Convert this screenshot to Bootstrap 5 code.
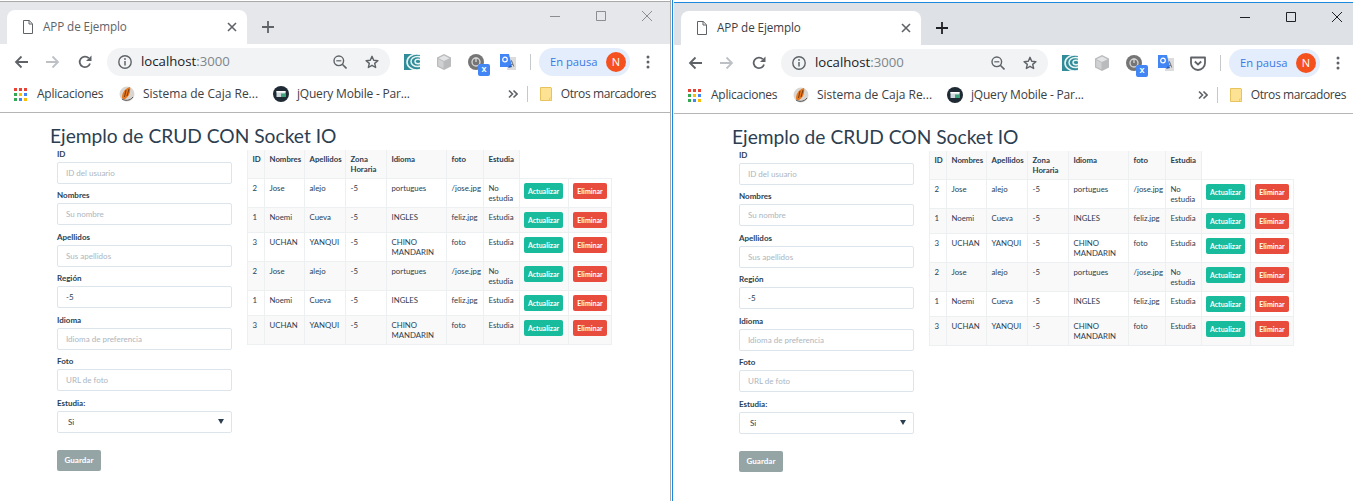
<!DOCTYPE html>
<html lang="es">
<head>
<meta charset="UTF-8">
<meta name="viewport" content="width=device-width, initial-scale=1.0">
<title>APP de Ejemplo</title>
<link href="https://cdn.jsdelivr.net/npm/bootstrap@5.3.0/dist/css/bootstrap.min.css" rel="stylesheet">
<style>
    html, body { height: 501px; overflow: hidden; }
    body { background: #fff; font-family: "Lato", sans-serif; color: #2c3e50; }

    /* windows */
    .win { height: 501px; flex: none; overflow: hidden; }
    .win-a { width: 671px; --strip: #e5e7ea; --ctl: #8a8d91; --tabtxt: #5f6368; --plus: #5f6368; --edge: 15px; --page: 50px; border-right: 1px solid #aaa; }
    .win-b { width: 681px; margin-left: 1px; padding-left: 1px; --strip: #dee1e6; --ctl: #202124; --tabtxt: #3c4043; --plus: #202124; --edge: 8px; --page: 58px; border-left: 1px solid #1a88dc; }
    .win-a .win-top { border-top: 1px solid #aaa; margin-top: 1px; }
    .win-b .win-top { border-top: 1px solid #1a88dc; margin-top: 2px; }

    /* tab strip */
    .chrome-ui { font-family: "Open Sans", "Noto Sans", sans-serif; color: #3c4043; }
    .tabstrip { height: 42px; background: var(--strip); padding: 8px 0 0 7px; }
    .tab-item { width: 240px; height: 34px; background: #fff; border-radius: 8px 8px 0 0; padding: 0 10px 0 15px; font-size: 11.7px; color: var(--tabtxt); }
    .tab-title { margin-left: 9px; letter-spacing: -.1px; }
    .tab-new { margin: 0 0 0 14px; width: 14px; height: 14px; color: var(--plus); }
    .win-ctl { margin-left: auto; height: 27px; margin-top: -8px; }
    .win-ctl svg { width: 12px; height: 12px; margin-right: 34px; color: var(--ctl); display: block; }
    .win-ctl svg:last-child { margin-right: 0; }
    .win-a .win-ctl { padding-right: 17px; }
    .win-b .win-ctl { padding-right: 10px; }

    /* toolbar */
    .toolbar { height: 34px; padding: 2px var(--edge) 0 14px; background: #fff; }
    .tb-ico { width: 14px; height: 14px; color: #5f6368; flex: none; }
    .tb-gap { margin-left: 18px; }
    .tb-off { color: #bdc1c6; }
    .omni { flex: 1 1 0; height: 28px; margin-left: 15px; background: #f1f3f4; border-radius: 14px; padding: 0 11px; font-size: 13.2px; }
    .omni-text { margin-left: 9px; color: #202124; }
    .omni-text span { color: #80868b; }
    .omni-zoom { margin-left: auto; }
    .omni-star { margin-left: 18px; }
    .ext { width: 16px; height: 16px; margin-left: 16px; flex: none; }
    .ext-first { margin-left: 14px; }
    .ext-wrap { position: relative; }
    .ext-badge { position: absolute; right: -6px; bottom: -6px; width: 12px; height: 12px; background: #4285f4; border-radius: 2px; color: #fff; font: 700 9px/11px "Liberation Sans", sans-serif; text-align: center; }
    .tb-sep { width: 1px; height: 16px; background: #c6c8ca; margin: 0 8px 0 14px; flex: none; }
    .pill { width: 91px; height: 28px; border-radius: 14px; background: #e3edfb; color: #3b78e7; font-size: 11.2px; padding: 0 4px 0 11px; flex: none; }
    .avatar { width: 20px; height: 20px; border-radius: 50%; background: #f4511e; color: #fff; font-size: 11px; line-height: 20px; text-align: center; margin-left: auto; }
    .dots { width: 14px; height: 14px; margin-left: 11px; flex: none; color: #5f6368; }

    /* bookmarks */
    .bookmarks { height: 35px; padding: 0 calc(var(--edge) - 1px) 2px 14px; border-bottom: 1px solid #b5b5b5; font-size: 12px; background: #fff; }
    .bm-item { flex: none; }
    .bm-apps { width: 105px; letter-spacing: -.25px; }
    .bm-sys { width: 154px; }
    .bm-jq { letter-spacing: -.2px; }
    .bm-ico { flex: none; width: 16px; height: 16px; margin-right: 8px; }
    .bm-grid { width: 13px; height: 13px; margin-right: 10px; }
    .bm-more { width: 10px; height: 10px; margin-left: auto; color: #5f6368; flex: none; }
    .bm-sep { width: 1px; height: 16px; background: #c6c8ca; margin: 0 12px 0 9px; flex: none; }
    .bm-folder { width: 12px; height: 14px; margin-right: 9px; flex: none; }
    .bm-other { letter-spacing: -.4px; }

    /* page */
    .page { padding-left: var(--page); }
    .page-title { font-size: 19.2px; line-height: 25px; font-weight: 400; margin: 0; padding-top: 10px; color: #2c3e50; font-family: "Lato", sans-serif; }
    .crud-form { width: 175px; margin-left: 7px; flex: none; }
    .fld-label { display: block; height: 12px; line-height: 12px; font-size: 8px; font-weight: 700; margin: 0 0 2px; }
    .fld-input, .fld-input:focus { height: 21.6px; min-height: 0; padding: 0 8px; margin-bottom: 5.9px; font-family: "Lato", sans-serif; font-size: 8px; color: #2c3e50; border: 1px solid #dce4ec; border-radius: 2px; box-shadow: none; }
    .fld-input::placeholder { color: #acb6c0; }
    .fld-select { padding-left: 10px; background-size: 6px 5px; background-position: right 7px center; background-image: url("data:image/svg+xml,%3csvg xmlns='http://www.w3.org/2000/svg' viewBox='0 0 6 5'%3e%3cpath fill='%232c3e50' d='M0 0h6L3 5z'/%3e%3c/svg%3e"); }
    .btn-save { display: block; width: 44px; height: 21px; margin-top: 17px; padding: 0; font-size: 8px; font-weight: 700; color: #fff; background: #95a5a6; border: 0; border-radius: 2px; }
    .tbl-wrap { width: 365px; margin: 2px 0 0 15px; flex: none; }
    .crud-table { --bs-table-striped-bg: #f9f9f9; --bs-table-border-color: #ecf0f1; --bs-table-color: #2c3e50; --bs-table-striped-color: #2c3e50; --bs-table-bg: #fff; table-layout: fixed; width: 364px; margin: 0; font-size: 7.8px; line-height: 10px; }
    .crud-table > tbody > tr > * { padding: 4px 4.5px; font-weight: 400; border-color: #ecf0f1; }
    .crud-table > tbody > tr > th { font-weight: 700; }
    .crud-table > tbody > tr > td:nth-child(n+8) { padding-left: 4px; }
    .crud-table > tbody > tr:first-child { border: 0; }
    .c-id { width: 17px; } .c-nom { width: 40px; } .c-ape { width: 41px; } .c-zona { width: 41px; }
    .c-idi { width: 60px; } .c-foto { width: 37px; } .c-est { width: 36px; } .c-upd { width: 49px; } .c-del { width: 43px; }
    .btn-row { display: block; height: 16px; padding: 0; font-size: 7px; line-height: 16px; font-weight: 700; color: #fff; border: 0; border-radius: 2px; }
    .btn-upd { width: 39px; background: #18bc9c; }
    .btn-del { width: 34px; background: #e74c3c; }
</style>
</head>
<body class="d-flex">

<svg class="d-none" xmlns="http://www.w3.org/2000/svg">
    <symbol id="i-doc" viewBox="0 0 12 14"><path d="M1.5.5h5.700l3.300 3.300v9.700h-9zM7 .5v3.500h3.500" fill="none" stroke="#5f6368"/></symbol>
    <symbol id="i-x" viewBox="0 0 10 10"><path d="M1 1l8 8M9 1L1 9" stroke="#5f6368" stroke-width="1.600"/></symbol>
    <symbol id="i-plus" viewBox="0 0 14 14"><path d="M7 1v12M1 7h12" stroke="currentColor" stroke-width="1.800"/></symbol>
    <symbol id="i-min" viewBox="0 0 12 12"><path d="M1 6.500h10" stroke="currentColor"/></symbol>
    <symbol id="i-max" viewBox="0 0 12 12"><path d="M1.500 1.500h9v9h-9z" fill="none" stroke="currentColor"/></symbol>
    <symbol id="i-close" viewBox="0 0 12 12"><path d="M1 1l10 10M11 1L1 11" stroke="currentColor"/></symbol>
    <symbol id="i-back" viewBox="0 0 14 14"><path d="M14 7H2M7.500 1.500L2 7l5.500 5.500" fill="none" stroke="currentColor" stroke-width="1.800"/></symbol>
    <symbol id="i-fwd" viewBox="0 0 14 14"><path d="M0 7h12M6.500 1.500L12 7l-5.500 5.500" fill="none" stroke="currentColor" stroke-width="1.800"/></symbol>
    <symbol id="i-reload" viewBox="0 0 14 14"><path d="M12 8.500A5.300 5.300 0 1 1 10.800 3.200" fill="none" stroke="currentColor" stroke-width="1.800"/><path d="M13.500 .5v5.500H8z" fill="currentColor"/></symbol>
    <symbol id="i-info" viewBox="0 0 14 14"><circle cx="7" cy="7" r="6.200" fill="none" stroke="currentColor" stroke-width="1.400"/><path d="M7 6v4.500" stroke="currentColor" stroke-width="1.500"/><circle cx="7" cy="4" r=".9" fill="currentColor"/></symbol>
    <symbol id="i-zoom" viewBox="0 0 14 14"><circle cx="5.800" cy="5.800" r="4.800" fill="none" stroke="currentColor" stroke-width="1.400"/><path d="M9.300 9.300L13.500 13.500" stroke="currentColor" stroke-width="1.600"/><path d="M3.300 5.800h5" stroke="currentColor" stroke-width="1.200"/></symbol>
    <symbol id="i-star" viewBox="0 0 14 14"><path d="M7 1.300l1.700 3.900 4.200.4-3.200 2.800.95 4.100L7 10.300l-3.650 2.200.95-4.100L1.100 5.600l4.200-.4z" fill="none" stroke="currentColor" stroke-width="1.400" stroke-linejoin="round"/></symbol>
    <symbol id="i-swirl" viewBox="0 0 16 16"><path d="M0 0h16v16H0z" fill="#2f8c98"/><g fill="none" stroke="#e8f3f4"><ellipse cx="13" cy="8" rx="10" ry="8" stroke-width="1.600"/><ellipse cx="13.500" cy="7.500" rx="6.500" ry="5" stroke-width="1.500"/><ellipse cx="14" cy="7.500" rx="3" ry="2.200" stroke-width="1.500"/></g></symbol>
    <symbol id="i-cube" viewBox="0 0 16 16"><path d="M8 0l7 3.500v9L8 16l-7-3.500v-9z" fill="#b9bbbd"/><path d="M8 1.500l5.500 2.700L8 7 2.500 4.200z" fill="#e3e4e5"/><path d="M2.200 5L7.500 7.800v6.500l-5.300-2.600z" fill="#d0d1d3"/></symbol>
    <symbol id="i-power" viewBox="0 0 16 16"><circle cx="8" cy="8" r="8" fill="#757575"/><circle cx="8" cy="8" r="4" fill="none" stroke="#d8d8d8" stroke-width="1.300"/><path d="M8 3.500V8" stroke="#d8d8d8" stroke-width="1.300"/></symbol>
    <symbol id="i-trans" viewBox="0 0 16 16"><path d="M8 3h8v13H7z" fill="#dcdcdc"/><path d="M11.500 6.500l-2.300 6M11.500 6.500l2.300 6M10 10.500h3" stroke="#777" fill="none"/><path d="M0 0h9l3 13H0z" fill="#4285f4"/><circle cx="5" cy="5.500" r="2.300" fill="none" stroke="#fff" stroke-width="1.200"/><path d="M8 14l4-1-2-2z" fill="#2a5db0"/></symbol>
    <symbol id="i-pocket" viewBox="0 0 16 16"><path d="M1 2.500h14v5.500a7 7 0 0 1-14 0z" fill="none" stroke="#5f6368" stroke-width="1.800" stroke-linejoin="round"/><path d="M4.800 6.500L8 9.500l3.200-3" fill="none" stroke="#5f6368" stroke-width="1.800"/></symbol>
    <symbol id="i-dots" viewBox="0 0 14 14"><circle cx="7" cy="2" r="1.500" fill="currentColor"/><circle cx="7" cy="7" r="1.500" fill="currentColor"/><circle cx="7" cy="12" r="1.500" fill="currentColor"/></symbol>
    <symbol id="i-apps" viewBox="0 0 13 13"><path d="M0 0h3v3H0z" fill="#ea4335"/><path d="M5 0h3v3H5z" fill="#ea4335"/><path d="M10 0h3v3h-3z" fill="#ea4335"/><path d="M0 5h3v3H0z" fill="#34a853"/><path d="M5 5h3v3H5z" fill="#fbbc05"/><path d="M10 5h3v3h-3z" fill="#4285f4"/><path d="M0 10h3v3H0z" fill="#34a853"/><path d="M5 10h3v3H5z" fill="#4285f4"/><path d="M10 10h3v3h-3z" fill="#fbbc05"/></symbol>
    <symbol id="i-caja" viewBox="0 0 16 16"><circle cx="8" cy="8" r="7.500" fill="#d9d6d2"/><path d="M3 11C3 6 7 2 11 1c1 4-1 10-5 12-1 .5-3 0-3-2z" fill="#e8761a"/><path d="M7 4l-1.500 7M10 3L8 10" stroke="#7a3b10" stroke-width="1"/><path d="M3 13c3 2 8 2 11-2" fill="none" stroke="#555"/></symbol>
    <symbol id="i-jq" viewBox="0 0 16 16"><circle cx="8" cy="8" r="8" fill="#1f2a35"/><path d="M3.500 5h9v6h-9z" fill="#cfd8dc"/><path d="M3.500 5h9v1.500h-9z" fill="#fff"/><path d="M8 7.500h4.500V11H8z" fill="#3fa37c"/></symbol>
    <symbol id="i-more" viewBox="0 0 10 10"><path d="M1 1.500L4.500 5 1 8.500M5.500 1.500L9 5 5.500 8.500" fill="none" stroke="currentColor" stroke-width="1.600"/></symbol>
    <symbol id="i-folder" viewBox="0 0 12 14"><path d="M.5.500h10.500l.5.500v12.500H.5z" fill="#fde293" stroke="#e6c35c"/><path d="M9.500 11h2v2.500h-2z" fill="#fde293" stroke="#e6c35c" stroke-width=".7"/></symbol>
</svg>

<section class="win win-a">
    <div class="win-top chrome-ui">
        <div class="tabstrip d-flex align-items-center">
            <div class="tab-item d-flex align-items-center">
                <svg width="12" height="14"><use href="#i-doc"/></svg>
                <span class="tab-title">APP de Ejemplo</span>
                <svg class="ms-auto" width="10" height="10"><use href="#i-x"/></svg>
            </div>
            <svg class="tab-new"><use href="#i-plus"/></svg>
            <div class="win-ctl d-flex align-items-center align-self-start">
                <svg><use href="#i-min"/></svg>
                <svg><use href="#i-max"/></svg>
                <svg><use href="#i-close"/></svg>
            </div>
        </div>
        <div class="toolbar d-flex align-items-center">
            <svg class="tb-ico"><use href="#i-back"/></svg>
            <svg class="tb-ico tb-gap tb-off"><use href="#i-fwd"/></svg>
            <svg class="tb-ico tb-gap"><use href="#i-reload"/></svg>
            <div class="omni d-flex align-items-center">
                <svg class="tb-ico"><use href="#i-info"/></svg>
                <span class="omni-text">localhost<span>:3000</span></span>
                <svg class="tb-ico omni-zoom"><use href="#i-zoom"/></svg>
                <svg class="tb-ico omni-star"><use href="#i-star"/></svg>
            </div>
            <svg class="ext ext-first"><use href="#i-swirl"/></svg>
            <svg class="ext"><use href="#i-cube"/></svg>
            <div class="ext ext-wrap"><svg class="d-block" width="16" height="16"><use href="#i-power"/></svg><span class="ext-badge">x</span></div>
            <svg class="ext"><use href="#i-trans"/></svg>
            <div class="tb-sep"></div>
            <div class="pill d-flex align-items-center">En pausa<span class="avatar">N</span></div>
            <svg class="dots"><use href="#i-dots"/></svg>
        </div>
        <div class="bookmarks d-flex align-items-center">
            <div class="bm-item bm-apps d-flex align-items-center"><svg class="bm-grid"><use href="#i-apps"/></svg>Aplicaciones</div>
            <div class="bm-item bm-sys d-flex align-items-center"><svg class="bm-ico"><use href="#i-caja"/></svg>Sistema de Caja Re...</div>
            <div class="bm-item bm-jq d-flex align-items-center"><svg class="bm-ico"><use href="#i-jq"/></svg>jQuery Mobile - Par...</div>
            <svg class="bm-more"><use href="#i-more"/></svg>
            <div class="bm-sep"></div>
            <svg class="bm-folder"><use href="#i-folder"/></svg>
            <span class="bm-other">Otros marcadores</span>
        </div>
    </div>
    <main class="page">
        <h2 class="page-title">Ejemplo de CRUD CON Socket IO</h2>
        <div class="d-flex">
            <form class="crud-form">
                <label class="fld-label">ID</label>
                <input class="form-control fld-input" placeholder="ID del usuario">
                <label class="fld-label">Nombres</label>
                <input class="form-control fld-input" placeholder="Su nombre">
                <label class="fld-label">Apellidos</label>
                <input class="form-control fld-input" placeholder="Sus apellidos">
                <label class="fld-label">Región</label>
                <input class="form-control fld-input" value="-5">
                <label class="fld-label">Idioma</label>
                <input class="form-control fld-input" placeholder="Idioma de preferencia">
                <label class="fld-label">Foto</label>
                <input class="form-control fld-input" placeholder="URL de foto">
                <label class="fld-label">Estudia:</label>
                <select class="form-select fld-input fld-select"><option>Si</option><option>No</option></select>
                <button type="button" class="btn btn-save">Guardar</button>
            </form>
            <div class="tbl-wrap">
                <table class="table table-bordered table-striped crud-table">
                    <colgroup><col class="c-id"><col class="c-nom"><col class="c-ape"><col class="c-zona"><col class="c-idi"><col class="c-foto"><col class="c-est"><col class="c-upd"><col class="c-del"></colgroup>
                    <tbody>
                        <tr><th>ID</th><th>Nombres</th><th>Apellidos</th><th>Zona Horaria</th><th>Idioma</th><th>foto</th><th>Estudia</th></tr>
                        <tr><td>2</td><td>Jose</td><td>alejo</td><td>-5</td><td>portugues</td><td>/jose.jpg</td><td>No estudia</td><td><button class="btn btn-row btn-upd">Actualizar</button></td><td><button class="btn btn-row btn-del">Eliminar</button></td></tr>
                        <tr><td>1</td><td>Noemi</td><td>Cueva</td><td>-5</td><td>INGLES</td><td>feliz.jpg</td><td>Estudia</td><td><button class="btn btn-row btn-upd">Actualizar</button></td><td><button class="btn btn-row btn-del">Eliminar</button></td></tr>
                        <tr><td>3</td><td>UCHAN</td><td>YANQUI</td><td>-5</td><td>CHINO MANDARIN</td><td>foto</td><td>Estudia</td><td><button class="btn btn-row btn-upd">Actualizar</button></td><td><button class="btn btn-row btn-del">Eliminar</button></td></tr>
                        <tr><td>2</td><td>Jose</td><td>alejo</td><td>-5</td><td>portugues</td><td>/jose.jpg</td><td>No estudia</td><td><button class="btn btn-row btn-upd">Actualizar</button></td><td><button class="btn btn-row btn-del">Eliminar</button></td></tr>
                        <tr><td>1</td><td>Noemi</td><td>Cueva</td><td>-5</td><td>INGLES</td><td>feliz.jpg</td><td>Estudia</td><td><button class="btn btn-row btn-upd">Actualizar</button></td><td><button class="btn btn-row btn-del">Eliminar</button></td></tr>
                        <tr><td>3</td><td>UCHAN</td><td>YANQUI</td><td>-5</td><td>CHINO MANDARIN</td><td>foto</td><td>Estudia</td><td><button class="btn btn-row btn-upd">Actualizar</button></td><td><button class="btn btn-row btn-del">Eliminar</button></td></tr>
                    </tbody>
                </table>
            </div>
        </div>
    </main>
</section>

<section class="win win-b">
    <div class="win-top chrome-ui">
        <div class="tabstrip d-flex align-items-center">
            <div class="tab-item d-flex align-items-center">
                <svg width="12" height="14"><use href="#i-doc"/></svg>
                <span class="tab-title">APP de Ejemplo</span>
                <svg class="ms-auto" width="10" height="10"><use href="#i-x"/></svg>
            </div>
            <svg class="tab-new"><use href="#i-plus"/></svg>
            <div class="win-ctl d-flex align-items-center align-self-start">
                <svg><use href="#i-min"/></svg>
                <svg><use href="#i-max"/></svg>
                <svg><use href="#i-close"/></svg>
            </div>
        </div>
        <div class="toolbar d-flex align-items-center">
            <svg class="tb-ico"><use href="#i-back"/></svg>
            <svg class="tb-ico tb-gap tb-off"><use href="#i-fwd"/></svg>
            <svg class="tb-ico tb-gap"><use href="#i-reload"/></svg>
            <div class="omni d-flex align-items-center">
                <svg class="tb-ico"><use href="#i-info"/></svg>
                <span class="omni-text">localhost<span>:3000</span></span>
                <svg class="tb-ico omni-zoom"><use href="#i-zoom"/></svg>
                <svg class="tb-ico omni-star"><use href="#i-star"/></svg>
            </div>
            <svg class="ext ext-first"><use href="#i-swirl"/></svg>
            <svg class="ext"><use href="#i-cube"/></svg>
            <div class="ext ext-wrap"><svg class="d-block" width="16" height="16"><use href="#i-power"/></svg><span class="ext-badge">x</span></div>
            <svg class="ext"><use href="#i-trans"/></svg>
            <svg class="ext"><use href="#i-pocket"/></svg>
            <div class="tb-sep"></div>
            <div class="pill d-flex align-items-center">En pausa<span class="avatar">N</span></div>
            <svg class="dots"><use href="#i-dots"/></svg>
        </div>
        <div class="bookmarks d-flex align-items-center">
            <div class="bm-item bm-apps d-flex align-items-center"><svg class="bm-grid"><use href="#i-apps"/></svg>Aplicaciones</div>
            <div class="bm-item bm-sys d-flex align-items-center"><svg class="bm-ico"><use href="#i-caja"/></svg>Sistema de Caja Re...</div>
            <div class="bm-item bm-jq d-flex align-items-center"><svg class="bm-ico"><use href="#i-jq"/></svg>jQuery Mobile - Par...</div>
            <svg class="bm-more"><use href="#i-more"/></svg>
            <div class="bm-sep"></div>
            <svg class="bm-folder"><use href="#i-folder"/></svg>
            <span class="bm-other">Otros marcadores</span>
        </div>
    </div>
    <main class="page">
        <h2 class="page-title">Ejemplo de CRUD CON Socket IO</h2>
        <div class="d-flex">
            <form class="crud-form">
                <label class="fld-label">ID</label>
                <input class="form-control fld-input" placeholder="ID del usuario">
                <label class="fld-label">Nombres</label>
                <input class="form-control fld-input" placeholder="Su nombre">
                <label class="fld-label">Apellidos</label>
                <input class="form-control fld-input" placeholder="Sus apellidos">
                <label class="fld-label">Región</label>
                <input class="form-control fld-input" value="-5">
                <label class="fld-label">Idioma</label>
                <input class="form-control fld-input" placeholder="Idioma de preferencia">
                <label class="fld-label">Foto</label>
                <input class="form-control fld-input" placeholder="URL de foto">
                <label class="fld-label">Estudia:</label>
                <select class="form-select fld-input fld-select"><option>Si</option><option>No</option></select>
                <button type="button" class="btn btn-save">Guardar</button>
            </form>
            <div class="tbl-wrap">
                <table class="table table-bordered table-striped crud-table">
                    <colgroup><col class="c-id"><col class="c-nom"><col class="c-ape"><col class="c-zona"><col class="c-idi"><col class="c-foto"><col class="c-est"><col class="c-upd"><col class="c-del"></colgroup>
                    <tbody>
                        <tr><th>ID</th><th>Nombres</th><th>Apellidos</th><th>Zona Horaria</th><th>Idioma</th><th>foto</th><th>Estudia</th></tr>
                        <tr><td>2</td><td>Jose</td><td>alejo</td><td>-5</td><td>portugues</td><td>/jose.jpg</td><td>No estudia</td><td><button class="btn btn-row btn-upd">Actualizar</button></td><td><button class="btn btn-row btn-del">Eliminar</button></td></tr>
                        <tr><td>1</td><td>Noemi</td><td>Cueva</td><td>-5</td><td>INGLES</td><td>feliz.jpg</td><td>Estudia</td><td><button class="btn btn-row btn-upd">Actualizar</button></td><td><button class="btn btn-row btn-del">Eliminar</button></td></tr>
                        <tr><td>3</td><td>UCHAN</td><td>YANQUI</td><td>-5</td><td>CHINO MANDARIN</td><td>foto</td><td>Estudia</td><td><button class="btn btn-row btn-upd">Actualizar</button></td><td><button class="btn btn-row btn-del">Eliminar</button></td></tr>
                        <tr><td>2</td><td>Jose</td><td>alejo</td><td>-5</td><td>portugues</td><td>/jose.jpg</td><td>No estudia</td><td><button class="btn btn-row btn-upd">Actualizar</button></td><td><button class="btn btn-row btn-del">Eliminar</button></td></tr>
                        <tr><td>1</td><td>Noemi</td><td>Cueva</td><td>-5</td><td>INGLES</td><td>feliz.jpg</td><td>Estudia</td><td><button class="btn btn-row btn-upd">Actualizar</button></td><td><button class="btn btn-row btn-del">Eliminar</button></td></tr>
                        <tr><td>3</td><td>UCHAN</td><td>YANQUI</td><td>-5</td><td>CHINO MANDARIN</td><td>foto</td><td>Estudia</td><td><button class="btn btn-row btn-upd">Actualizar</button></td><td><button class="btn btn-row btn-del">Eliminar</button></td></tr>
                    </tbody>
                </table>
            </div>
        </div>
    </main>
</section>

<script src="https://cdn.jsdelivr.net/npm/bootstrap@5.3.0/dist/js/bootstrap.bundle.min.js"></script>
</body>
</html>
